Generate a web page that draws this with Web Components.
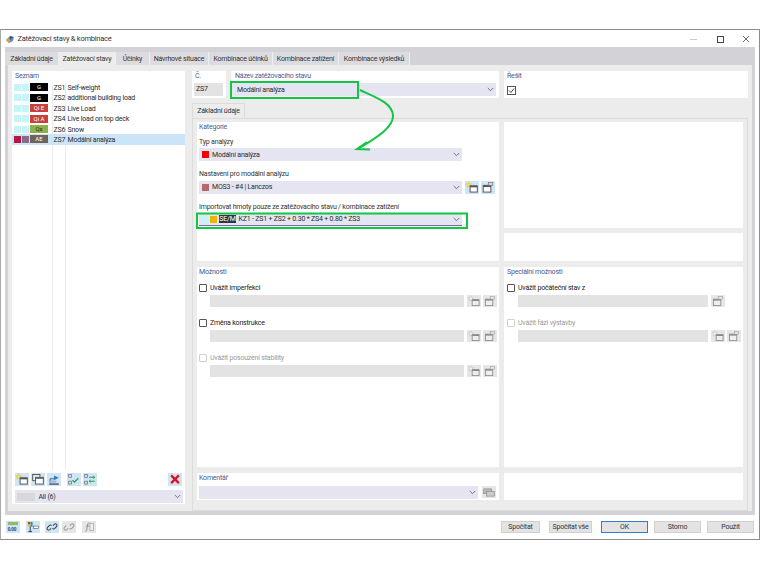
<!DOCTYPE html>
<html lang="cs">
<head>
<meta charset="utf-8">
<title>Zatěžovací stavy & kombinace</title>
<style>
html,body{margin:0;padding:0;background:#fff}
body{font-family:Roboto,"Open Sans",sans-serif;font-size:7px;letter-spacing:-.2px;color:#2b2b2b}
</style>
</head>
<body>
<load-dialog></load-dialog>
<script>
const ICONS = {
    add: `<path d="M3.5 .8l.8 2 2.1.2-1.6 1.4.5 2.1-1.8-1.1-1.8 1.1.5-2.1L.6 3l2.1-.2z" fill="#f7e63c" stroke="#c4b230" stroke-width=".4"/><rect x="5" y="5" width="7.5" height="6.5" fill="#fff" stroke="#444" stroke-width=".9"/><rect x="5" y="5" width="7.5" height="1.6" fill="#555"/>`,
    addOff: `<path d="M3.5 .8l.8 2 2.1.2-1.6 1.4.5 2.1-1.8-1.1-1.8 1.1.5-2.1L.6 3l2.1-.2z" fill="#f2f2f2" stroke="#aaa" stroke-width=".4"/><rect x="5" y="5" width="7.5" height="6.5" fill="#eee" stroke="#8a8a8a" stroke-width=".9"/><rect x="5" y="5" width="7.5" height="1.5" fill="#8a8a8a"/>`,
    edit: `<rect x="2" y="4.5" width="8" height="7" fill="#fff" stroke="#444" stroke-width=".9"/><rect x="2" y="4.5" width="8" height="1.8" fill="#555"/><rect x="7.5" y="1.5" width="4.5" height="3" fill="#d9d9d9" stroke="#666" stroke-width=".6"/>`,
    editOff: `<rect x="2" y="4.5" width="8" height="7" fill="#eee" stroke="#8a8a8a" stroke-width=".9"/><rect x="2" y="4.5" width="8" height="1.6" fill="#8a8a8a"/><rect x="7.5" y="1.5" width="4.5" height="3" fill="#e6e6e6" stroke="#999" stroke-width=".6"/>`,
    copy: `<rect x="1.5" y="1.5" width="7.5" height="6.5" fill="#e8eef6" stroke="#444" stroke-width=".9"/><rect x="4.5" y="4.5" width="8" height="7" fill="#fff" stroke="#444" stroke-width=".9"/><rect x="4.5" y="4.5" width="8" height="1.6" fill="#666"/>`,
    load: `<path d="M2 11.5h10" stroke="#333" stroke-width="1.2"/><path d="M3 10V6h5" fill="none" stroke="#555" stroke-width="1"/><path d="M7 2.5l5 2.5-5 2.5z" fill="#2c7fc2"/><rect x="3.5" y="7.5" width="6" height="3" fill="#9fc4e6"/>`,
    check: `<rect x="1.5" y="1.5" width="3" height="3" fill="none" stroke="#666" stroke-width=".7"/><rect x="1.5" y="8.5" width="3" height="3" fill="none" stroke="#666" stroke-width=".7"/><path d="M5.5 7.5l2 2 4-4" fill="none" stroke="#2f9e3e" stroke-width="1.3"/>`,
    swap: `<rect x="1.5" y="1.5" width="3" height="3" fill="none" stroke="#666" stroke-width=".7"/><rect x="1.5" y="8.5" width="3" height="3" fill="none" stroke="#666" stroke-width=".7"/><path d="M6 4.5h6M6 8.5h6" stroke="#2f9e3e" stroke-width="1.1"/><path d="M10 3l2 1.5L10 6M8 7L6 8.5 8 10" fill="none" stroke="#2f9e3e" stroke-width=".8"/>`,
    del: `<path d="M3 2.5l8 8M11 2.5l-8 8" stroke="#e3101c" stroke-width="2.4"/>`,
    units: `<rect x="1.5" y="1" width="11" height="3.4" fill="#8dbb6a"/><text x="1.2" y="10.5" font-size="5.2" font-family="Liberation Sans" font-weight="700" fill="#2a3f63">0.00</text>`,
    colors: `<rect x="1.5" y="1" width="2.4" height="2.4" fill="#d8342c"/><rect x="4.2" y="1" width="2.4" height="2.4" fill="#2f9e3e"/><rect x="1.5" y="3.6" width="2.4" height="2.4" fill="#e8b818"/><rect x="4.2" y="3.6" width="2.4" height="2.4" fill="#2c7fc2"/><path d="M4 6v5.5M2 11.5h4" stroke="#333" stroke-width="1"/><rect x="7.5" y="5.5" width="5.5" height="2.6" fill="#fff" stroke="#444" stroke-width=".6"/>`,
    link: `<path d="M6 8l-1.6 1.6a1.8 1.8 0 0 1-2.5-2.5L4 5a1.8 1.8 0 0 1 2.5 0M8 5l1.6-1.6a1.8 1.8 0 0 1 2.5 2.5L10 8a1.8 1.8 0 0 1-2.5 0" fill="none" stroke="#444" stroke-width="1.1"/>`,
    unlink: `<path d="M6 8l-1.6 1.6a1.8 1.8 0 0 1-2.5-2.5L4 5M10 8a1.8 1.8 0 0 1-2.5 0M8 5l1.6-1.6a1.8 1.8 0 0 1 2.5 2.5L10 8" fill="none" stroke="#9a9a9a" stroke-width="1.1"/>`,
    formula: `<path d="M3 11c1.5 0 1.6-1 2-4.5S6 2 7.5 2" fill="none" stroke="#8a8a8a" stroke-width="1"/><path d="M3.5 5.5h4" stroke="#8a8a8a" stroke-width=".8"/><rect x="8" y="2.5" width="4" height="8" fill="#eee" stroke="#9a9a9a" stroke-width=".7"/>`,
    note: `<rect x="1.5" y="3" width="8" height="5" fill="#bbb" stroke="#888" stroke-width=".7"/><rect x="4.5" y="5.5" width="8" height="5" fill="#ccc" stroke="#888" stroke-width=".7"/>`
}

// small square toolbar button, the picture comes from the icon attribute
class IconButton extends HTMLElement{
    constructor(){
        super()
        this.attachShadow({mode : 'open'})
    }
    connectedCallback(){
        const off = this.hasAttribute('off')
        this.shadowRoot.innerHTML = `
            <style>
                :host{display:block;flex:none;width:14px;height:12.5px;background:${off ? '#e6e6e6' : '#cfe4f6'}}
                svg{display:block;width:14px;height:100%}
            </style>
            <svg viewBox="0 0 14 13">${ICONS[this.getAttribute('icon')] || ''}</svg>
        `
    }
}
customElements.define('icon-button',IconButton)

class DropDown extends HTMLElement{
    constructor(){
        super()
        this.attachShadow({mode : 'open'})
        this.shadowRoot.innerHTML = `
            <style>
                :host{display:flex;align-items:center;height:13px;background:#e5e5f1;padding-left:3px;box-sizing:border-box;min-width:0;white-space:nowrap;color:#2b2b2b}
                :host([underline]){border-bottom:1px solid #6f6fa0}
                .text{flex:1;display:flex;align-items:center;gap:3.5px;min-width:0}
                svg{flex:none;width:7px;height:5px;margin-right:2px}
            </style>
            <span class="text"><slot></slot></span>
            <svg viewBox="0 0 7 5"><path d="M.8 1l2.7 2.7L6.2 1" fill="none" stroke="#666" stroke-width=".9"/></svg>
        `
    }
}
customElements.define('drop-down',DropDown)

class GroupBox extends HTMLElement{
    constructor(){
        super()
        this.attachShadow({mode : 'open'})
        this.shadowRoot.innerHTML = `
            <style>
                :host{display:block;background:#fff;box-sizing:border-box;padding:1px 2px 0;min-width:0}
                .title{color:#4a5a92;height:9px;line-height:9px;white-space:nowrap}
            </style>
            <div class="title"></div>
            <slot></slot>
        `
    }
    connectedCallback(){
        this.shadowRoot.querySelector('.title').textContent = this.getAttribute('title') || ''
    }
}
customElements.define('group-box',GroupBox)

// checkbox line with a grey field under it and the buttons on the right
class OptionRow extends HTMLElement{
    constructor(){
        super()
        this.attachShadow({mode : 'open'})
    }
    connectedCallback(){
        const off = this.hasAttribute('off')
        const icons = (this.getAttribute('icons') || 'addOff editOff').split(' ')
        this.shadowRoot.innerHTML = `
            <style>
                :host{display:block;height:35px}
                .line{display:flex;align-items:center;gap:3px;height:13px;color:${off ? '#9a9a9a' : '#222'};white-space:nowrap}
                .box{width:6px;height:6px;border:1px solid ${off ? '#d0d0d0' : '#555'};background:#fff;border-radius:1px;flex:none}
                .field{display:flex;gap:2px;padding-left:11px}
                .grey{flex:1;height:12px;background:#e3e3e3;margin-right:1px}
                icon-button{height:12px}
                .blank{width:14px;flex:none}
            </style>
            <div class="line"><span class="box"></span><span class="label"></span></div>
            <div class="field"><div class="grey"></div>${icons.map(i => i === 'blank' ? '<span class="blank"></span>' : `<icon-button icon="${i}" off></icon-button>`).join('')}</div>
        `
        this.shadowRoot.querySelector('.label').textContent = this.getAttribute('label')
    }
}
customElements.define('option-row',OptionRow)

class CaseRow extends HTMLElement{
    constructor(){
        super()
        this.attachShadow({mode : 'open'})
    }
    connectedCallback(){
        const a = n => this.getAttribute(n)
        this.shadowRoot.innerHTML = `
            <style>
                :host{display:flex;align-items:center;height:10.4px;white-space:nowrap;color:#2b2b2b}
                :host([selected]){background:#cce4f8}
                i{display:block;width:6.5px;height:7px;margin-left:2px;background:${a('c1') || '#c6f5f7'}}
                i + i{margin-left:1.5px;background:${a('c2') || '#c6f5f7'}}
                b{display:block;width:18px;height:8px;line-height:8.5px;margin:0 5.5px 0 1.5px;text-align:center;font-weight:400;font-size:6px;letter-spacing:0;overflow:hidden;color:${a('fg') || '#fff'};background:${a('bg')}}
                .id{width:14px;flex:none;padding-top:1px}
                .name{padding-top:1px}
            </style>
            <i></i><i></i><b></b><span class="id"></span><span class="name"></span>
        `
        this.shadowRoot.querySelector('b').textContent = a('tag')
        this.shadowRoot.querySelector('.id').textContent = a('no')
        this.shadowRoot.querySelector('.name').textContent = a('name')
    }
}
customElements.define('case-row',CaseRow)

class TabStrip extends HTMLElement{
    constructor(){
        super()
        this.attachShadow({mode : 'open'})
    }
    connectedCallback(){
        const active = Number(this.getAttribute('active'))
        const names = this.getAttribute('names').split('|')
        this.shadowRoot.innerHTML = `
            <style>
                :host{display:flex;align-items:flex-end;white-space:nowrap;color:#333}
                span{display:block;height:13px;line-height:14px;box-sizing:border-box;background:#dcdce0;border-right:1px solid #eeeef0;text-align:center}
                span.on{background:#ececec}
            </style>
            ${names.map((n,i) => {
                const [label,w] = n.split(':')
                return `<span class="${i === active ? 'on' : ''}" style="width:${w}px">${label}</span>`
            }).join('')}
        `
    }
}
customElements.define('tab-strip',TabStrip)

class CaseList extends HTMLElement{
    constructor(){
        super()
        this.attachShadow({mode : 'open'})
        this.shadowRoot.innerHTML = `
            <style>
                :host{display:flex;flex-direction:column;background:#fff;box-sizing:border-box;padding:1px 0 0;min-height:0}
                .title{color:#4a5a92;height:9px;line-height:9px;padding-left:3px}
                .rows{flex:1;margin:1.3px 0 3px;background:linear-gradient(#ececec,#ececec) 39.5px 0/1px 100% no-repeat,linear-gradient(#ececec,#ececec) 53px 0/1px 100% no-repeat}
                .tools{display:flex;gap:2px;padding:0 3px;height:13px}
                .gap{width:2px}
                .grow{flex:1}
                .bottom{padding:4px 2px 1px 3px}
                .swatch{width:18px;height:8px;background:#d8d8d8;margin-left:-1px}
            </style>
            <div class="title">Seznam</div>
            <div class="rows">
                <case-row bg="#000" tag="G" no="ZS1" name="Self-weight"></case-row>
                <case-row bg="#000" tag="G" no="ZS2" name="additional building load"></case-row>
                <case-row bg="#c8403c" tag="Qi E" no="ZS3" name="Live Load"></case-row>
                <case-row bg="#c8403c" tag="Qi A" no="ZS4" name="Live load on top deck"></case-row>
                <case-row bg="#8db04a" fg="#22300c" tag="Qs" no="ZS6" name="Snow"></case-row>
                <case-row selected c1="#b8143c" c2="#8c6a8c" bg="#6e6458" tag="AE" no="ZS7" name="Modální analýza"></case-row>
            </div>
            <div class="tools">
                <icon-button icon="add"></icon-button>
                <icon-button icon="copy"></icon-button>
                <icon-button icon="load"></icon-button>
                <span class="gap"></span>
                <icon-button icon="check"></icon-button>
                <icon-button icon="swap"></icon-button>
                <span class="grow"></span>
                <icon-button icon="del"></icon-button>
            </div>
            <div class="bottom"><drop-down><span class="swatch"></span>All (6)</drop-down></div>
        `
    }
}
customElements.define('case-list',CaseList)

class LoadDialog extends HTMLElement{
    constructor(){
        super()
        this.attachShadow({mode : 'open'})
        this.shadowRoot.innerHTML = `
            <style>
                :host{display:block;height:570px;box-sizing:border-box;padding-top:29px;position:relative}
                .window{height:511px;box-sizing:border-box;border:1px solid #8c8c8c;border-left-color:#aaa;display:flex;flex-direction:column;background:#fff}
                .titlebar{display:flex;align-items:center;height:17px;padding:0 0 0 4px;gap:2.5px;color:#333;font-size:7.5px;letter-spacing:-.25px;flex:none}
                .titlebar .grow{flex:1}
                .logo{width:10px;height:10px;flex:none}
                .ctl{width:70px;height:10px;flex:none;margin-right:5px}
                .body{flex:1;min-height:0;margin:0 4px;background:#ececec;display:flex;flex-direction:column}
                .tabbar{height:18px;flex:none;background:#d3d3d7;display:flex;align-items:flex-end}
                .main{flex:1;min-height:0;display:grid;grid-template-columns:173px 1fr;column-gap:7px;padding:6px 4px 0;border:solid #d3d3d7;border-width:0 3px 4px}
                .side{display:flex;flex-direction:column;min-height:0;padding-bottom:7px}
                .right{display:flex;flex-direction:column;min-height:0}
                .top{display:grid;grid-template-columns:34px 268px 1fr;gap:5px;height:27px;flex:none}
                .top group-box{padding:1px 3px 0}
                .top .num{display:block;height:13px;line-height:13px;margin:2px 0 0 -1px;background:#e3e3e3;padding-left:2px;width:29px;box-sizing:border-box}
                .top drop-down{margin-top:2px}
                .top .named{padding-left:4px}
                .name{margin-left:-3px}
                .pagetab{height:15px;margin-top:5px;flex:none;display:flex}
                .pagetab span{display:block;width:53px;text-align:center;line-height:15px;background:#ececec;border:1px solid #dcdcdc;border-bottom:0;box-sizing:border-box;color:#333}
                .page{flex:1;min-height:0;border:1px solid #dcdcdc;background:#ececec;padding:3px 4px 0;display:grid;grid-template-columns:302px 239px;grid-template-rows:139px 200px 27px;column-gap:5px;row-gap:6px}
                .stack{display:grid;grid-template-rows:106px 1fr;gap:5px;min-height:0}
                .white{background:#fff}
                .label{height:9px;line-height:9px;color:#333;white-space:nowrap}
                .dd{display:flex;gap:3px;padding-right:1px}
                .dd drop-down{width:263px;flex:none}
                .sq{display:block;width:6.5px;height:7px;flex:none}
                .tag{background:#33333a;color:#fff;width:17px;text-align:center;line-height:8px;flex:none;margin:0 -1px}
                .spec{padding-left:3px;padding-right:2px}
                .comment{display:flex;gap:4px;margin-top:2.5px;padding-right:1px}
                .comment drop-down{width:279px;flex:none}
                .footer{display:flex;align-items:center;height:24px;flex:none;padding:0 5px;gap:5px}
                .footer .grow{flex:1}
                .footer icon-button{height:12px}
                .btn{display:block;height:12px;line-height:11px;box-sizing:border-box;background:#e3e3e3;border:1px solid #d0d0d0;text-align:center;color:#333;white-space:nowrap;flex:none}
                .btn.ok{border-color:#2f7fd0}
                .notes{position:absolute;left:0;top:0;width:760px;height:570px;pointer-events:none}
            </style>
            <div class="window">
                <div class="titlebar">
                    <svg class="logo" viewBox="0 0 10 10"><path d="M1 6l4-4 4 1-1 4-4 2z" fill="#6f8fb8"/><path d="M1 6l3 3 1-3-2-2z" fill="#d9a441"/><path d="M5 2l3 1-3 3z" fill="#2f4f80"/></svg>
                    <span>Zatěžovací stavy &amp; kombinace</span>
                    <span class="grow"></span>
                    <svg class="ctl" viewBox="0 0 70 10"><path d="M6 5.5h7" stroke="#ccc"/><rect x="33.5" y="2.5" width="6" height="6" fill="none" stroke="#444"/><path d="M59 2l6 6M65 2l-6 6" stroke="#444" stroke-width=".8"/></svg>
                </div>
                <div class="body">
                    <div class="tabbar">
                        <tab-strip active="1" names="Základní údaje:54|Zatěžovací stavy:57|Účinky:34|Návrhové situace:59|Kombinace účinků:64|Kombinace zatížení:66|Kombinace výsledků:71"></tab-strip>
                    </div>
                    <div class="main">
                        <div class="side"><case-list style="flex:1"></case-list></div>
                        <div class="right">
                            <div class="top">
                                <group-box title="Č."><span class="num">ZS7</span></group-box>
                                <group-box class="named" title="Název zatěžovacího stavu"><div class="name"><drop-down style="padding-left:5px">Modální analýza</drop-down></div></group-box>
                                <group-box title="Řešit">
                                    <svg style="display:block;margin:4.5px 0 0 0" width="9" height="9" viewBox="0 0 9 9"><rect x=".5" y=".5" width="8" height="8" fill="#fff" stroke="#555"/><path d="M2 4.5l2 2 3-4" fill="none" stroke="#444"/></svg>
                                </group-box>
                            </div>
                            <div class="pagetab"><span>Základní údaje</span></div>
                            <div class="page">
                                <group-box title="Kategorie">
                                    <div class="label" style="margin-top:5.5px">Typ analýzy</div>
                                    <div class="dd" style="margin-top:1.5px"><drop-down><span class="sq" style="background:#f00000"></span>Modální analýza</drop-down></div>
                                    <div class="label" style="margin-top:8.5px">Nastavení pro modální analýzu</div>
                                    <div class="dd" style="margin-top:2.5px"><drop-down style="height:12.5px"><span class="sq" style="background:#b56a6a"></span>MOS3 - #4 | Lanczos</drop-down><icon-button icon="add"></icon-button><icon-button icon="edit" style="margin-left:-1px"></icon-button></div>
                                    <div class="label" style="margin-top:9px">Importovat hmoty pouze ze zatěžovacího stavu / kombinace zatížení</div>
                                    <div class="dd" style="margin-top:1.5px"><drop-down underline><span class="sq" style="background:#c6f5f7"></span><span class="sq" style="background:#f0b400;margin-left:-2px"></span><span class="tag">SE/M</span>KZ1 - ZS1 + ZS2 + 0.30 * ZS4 + 0.80 * ZS3</drop-down></div>
                                </group-box>
                                <div class="stack"><div class="white"></div><div class="white"></div></div>
                                <group-box title="Možnosti">
                                    <div style="height:4.8px"></div>
                                    <option-row label="Uvážit imperfekci"></option-row>
                                    <option-row label="Změna konstrukce"></option-row>
                                    <option-row off label="Uvážit posouzení stability"></option-row>
                                </group-box>
                                <group-box class="spec" title="Speciální možnosti">
                                    <div style="height:4.8px"></div>
                                    <option-row label="Uvážit počáteční stav z" icons="editOff blank"></option-row>
                                    <option-row off label="Uvážit fázi výstavby"></option-row>
                                </group-box>
                                <group-box title="Komentář">
                                    <div class="comment"><drop-down></drop-down><icon-button icon="note" off></icon-button></div>
                                </group-box>
                                <div class="white"></div>
                            </div>
                        </div>
                    </div>
                </div>
                <div class="footer">
                    <icon-button icon="units"></icon-button>
                    <icon-button icon="colors" style="margin-left:1px"></icon-button>
                    <icon-button icon="link"></icon-button>
                    <icon-button icon="unlink" off style="margin-left:-2px"></icon-button>
                    <icon-button icon="formula" off style="margin-left:1px"></icon-button>
                    <span class="grow"></span>
                    <span class="btn" style="width:39px">Spočítat</span>
                    <span class="btn" style="width:43px;margin-left:4px">Spočítat vše</span>
                    <span class="btn ok" style="width:47px;margin-left:4px">OK</span>
                    <span class="btn" style="width:47px;margin-left:1px">Storno</span>
                    <span class="btn" style="width:47px;margin-left:1px">Použít</span>
                </div>
            </div>
            <svg class="notes" viewBox="0 0 760 570">
                <rect x="231" y="82" width="127" height="16" fill="none" stroke="#12c544" stroke-width="2"/>
                <rect x="197" y="213.5" width="270" height="14.5" fill="none" stroke="#12c544" stroke-width="2"/>
                <path d="M360 90C375 97 393 103 393 116C393 129 372 140 358 149" fill="none" stroke="#12c544" stroke-width="2"/>
                <path d="M367 142l-10 7 13 .5" fill="none" stroke="#12c544" stroke-width="2"/>
            </svg>
        `
    }
}
customElements.define('load-dialog',LoadDialog)
</script>
</body>
</html>
